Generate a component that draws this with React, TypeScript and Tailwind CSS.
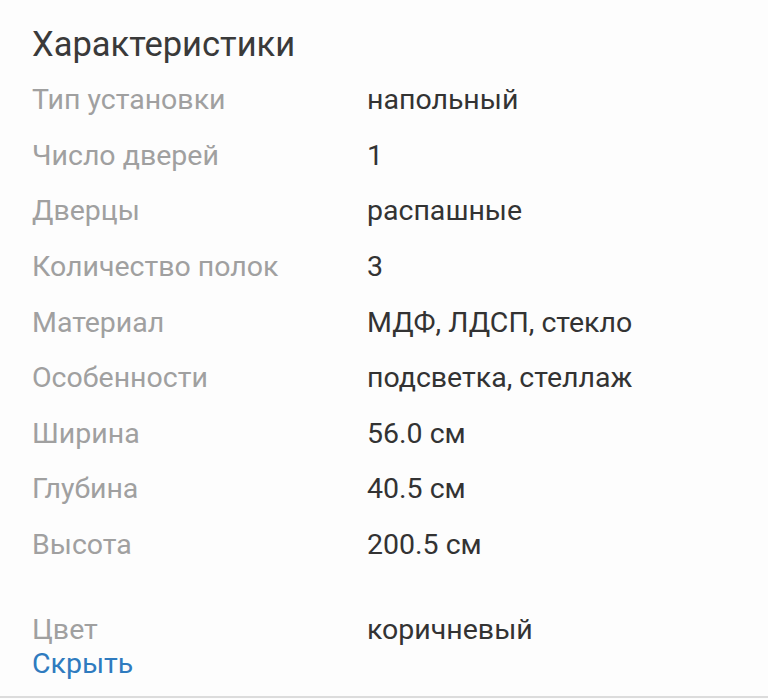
import React from "react";

const rows: [string, string][] = [
  ["Тип установки", "напольный"],
  ["Число дверей", "1"],
  ["Дверцы", "распашные"],
  ["Количество полок", "3"],
  ["Материал", "МДФ, ЛДСП, стекло"],
  ["Особенности", "подсветка, стеллаж"],
  ["Ширина", "56.0 см"],
  ["Глубина", "40.5 см"],
  ["Высота", "200.5 см"],
];

export default function App() {
  return (
    <div
      className="w-[768px] h-[699px] bg-[#fdfdfd] flex flex-col overflow-hidden"
      style={{ fontFamily: "Roboto, 'Noto Sans', sans-serif" }}
    >
      <div className="flex-1 flex flex-col pl-[32px]">
        <h1 className="text-[34.5px] leading-[40px] text-[#3a3a3a] mt-[24px] mb-[8px]">
          Характеристики
        </h1>
        {rows.map(([k, v]) => (
          <div key={k} className="flex items-center h-[55.6px] text-[28.5px] leading-[33px]">
            <div className="w-[335px] text-[#a0a0a0]">{k}</div>
            <div className="text-[#333333]">{v}</div>
          </div>
        ))}
        <div className="flex items-center mt-[41px] h-[33px] text-[28.5px] leading-[33px]">
          <div className="w-[335px] text-[#a0a0a0]">Цвет</div>
          <div className="text-[#333333]">коричневый</div>
        </div>
        <div className="mt-[1px] text-[28.5px] leading-[33px] text-[#2f7bbf]">Скрыть</div>
      </div>
      <div className="h-[2px] bg-[#dcdcdc] mb-[1px]" />
    </div>
  );
}
